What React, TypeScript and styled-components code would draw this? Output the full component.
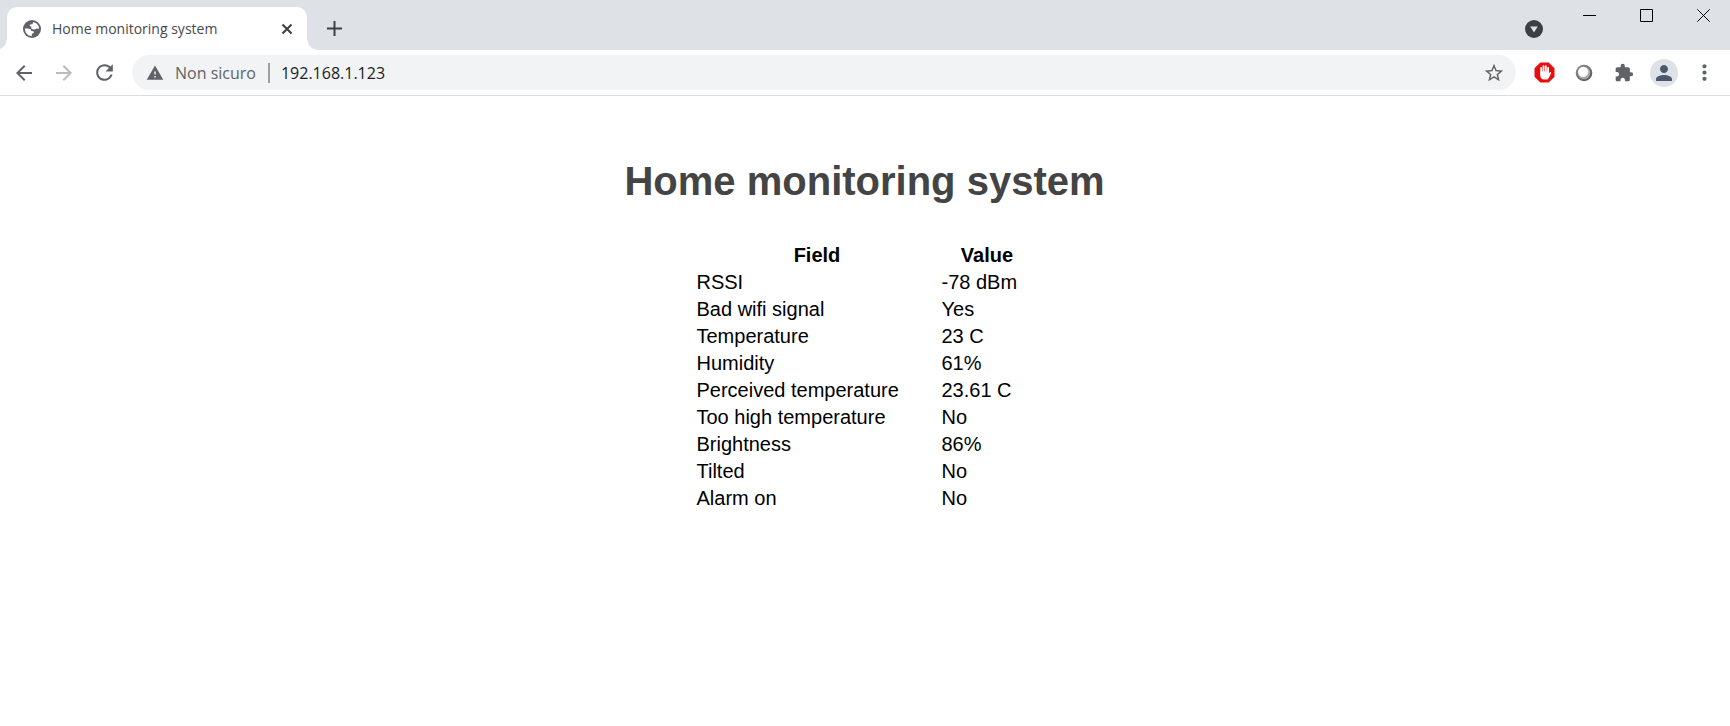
import React from "react";
import styled, { createGlobalStyle } from "styled-components";
import {
  MdArrowBack,
  MdArrowForward,
  MdRefresh,
  MdWarning,
  MdStarBorder,
  MdExtension,
  MdPerson,
  MdMoreVert,
} from "react-icons/md";

const GlobalStyle = createGlobalStyle`
  * { box-sizing: border-box; }
  body { margin: 0; background: #fff; }
  button { margin: 0; padding: 0; border: 0; background: none; font: inherit; cursor: pointer; }
`;

const chromeFont = `"Segoe UI", "Open Sans", "Noto Sans", sans-serif`;

const Browser = styled.div`
  display: flex;
  flex-direction: column;
  min-height: 100vh;
  font-family: ${chromeFont};
`;

const TabStrip = styled.header`
  display: flex;
  align-items: flex-start;
  height: 50px;
  padding-left: 7px;
  background: #dee1e6;
`;

const Tab = styled.div`
  position: relative;
  display: flex;
  align-items: center;
  width: 300px;
  height: 43px;
  margin-top: 7px;
  padding: 0 10px 0 15px;
  border-radius: 10px 10px 0 0;
  background: #fff;

  &::before,
  &::after {
    content: "";
    position: absolute;
    bottom: 0;
    width: 10px;
    height: 10px;
  }
  &::before {
    right: 100%;
    background: radial-gradient(circle at 0 0, transparent 9px, #fff 10px);
  }
  &::after {
    left: 100%;
    background: radial-gradient(circle at 100% 0, transparent 9px, #fff 10px);
  }
`;

const TabTitle = styled.span`
  flex: 1;
  margin-left: 10px;
  font-size: 14px;
  line-height: 20px;
  color: #45494d;
  white-space: nowrap;
`;

const IconButton = styled.button<{ $width?: number; $height?: number; $color?: string }>`
  display: flex;
  flex: none;
  align-items: center;
  justify-content: center;
  width: ${(p) => p.$width ?? 40}px;
  height: ${(p) => p.$height ?? 36}px;
  color: ${(p) => p.$color ?? "#5f6368"};
`;

const NewTab = styled(IconButton)`
  margin: 8px 0 0 9px;
`;

const TabSearch = styled(IconButton)`
  margin: 11px 9px 0 auto;
`;

const WindowControls = styled.div`
  display: flex;
  margin-right: -2px;
`;

const Toolbar = styled.nav`
  display: flex;
  align-items: center;
  height: 46px;
  padding: 0 6px 0 4px;
  border-bottom: 1px solid #dadce0;
  background: #fff;
`;

const AddressBar = styled.div`
  display: flex;
  flex: 1;
  align-items: center;
  height: 35px;
  margin: 0 8px;
  padding: 0 2px 0 14px;
  border-radius: 18px;
  background: #f1f3f4;
`;

const SecurityButton = styled.button`
  display: flex;
  align-items: center;
  gap: 11px;
  color: #5f6368;
  font-size: 16px;
  line-height: 24px;
`;

const Divider = styled.span`
  width: 2px;
  height: 20px;
  margin: 0 11px 0 12px;
  background: #9aa0a6;
`;

const AddressInput = styled.input`
  flex: 1;
  min-width: 0;
  padding: 0;
  border: 0;
  outline: 0;
  background: transparent;
  color: #202124;
  font-family: ${chromeFont};
  font-size: 16px;
  line-height: 24px;
`;

const Avatar = styled.span`
  display: flex;
  align-items: center;
  justify-content: center;
  width: 28px;
  height: 28px;
  border-radius: 50%;
  background: #dee1e6;
  color: #4c5870;
`;

const Page = styled.main`
  display: flex;
  flex-direction: column;
  align-items: center;
  padding: 62px 1px 40px 0;
  font-family: Arial, "Liberation Sans", sans-serif;
`;

const Title = styled.h1`
  margin: 0 0 37px;
  color: #444;
  font-size: 40px;
  line-height: 46px;
`;

const Readings = styled.table`
  border-spacing: 2px;
  color: #000;
  font-size: 20px;
  line-height: 23px;
`;

const cell = `
  padding: 1px;
  white-space: nowrap;
`;

const HeadCell = styled.th<{ $width: number }>`
  ${cell}
  width: ${(p) => p.$width}px;
`;

const Cell = styled.td`
  ${cell}
`;

const readings = [
  ["RSSI", "-78 dBm"],
  ["Bad wifi signal", "Yes"],
  ["Temperature", "23 C"],
  ["Humidity", "61%"],
  ["Perceived temperature", "23.61 C"],
  ["Too high temperature", "No"],
  ["Brightness", "86%"],
  ["Tilted", "No"],
  ["Alarm on", "No"],
];

const Globe = () => (
  <svg width="20" height="20" viewBox="0 0 20 20" aria-hidden="true">
    <circle cx="10" cy="10" r="9" fill="#5f6368" />
    <path
      d="M11.4 3 14.6 4.4 16.8 7.6 17 9.8 14.6 9.6 13 10.4 10.4 10.2 9.2 9.4 9.4 7.4 7.6 7 8 5.6 10.4 5.2ZM2.8 9.4 6.4 9.4 8.8 10.4 9.4 12 11.6 12.2 11.8 14 9.8 14.8 9.8 17.2 6.2 16.2 3.6 13.4Z"
      fill="#fff"
    />
  </svg>
);

const StopHand = () => (
  <svg width="21" height="21" viewBox="0 0 21 21" aria-hidden="true">
    <path d="M6.3.5h8.4l5.8 5.8v8.4l-5.8 5.8H6.3L.5 14.7V6.3Z" fill="#e60f0f" />
    <path
      d="M7.2 12V5.8M9.5 11V4.2M11.8 11V4.2M14.1 12V5.8"
      stroke="#fff"
      strokeWidth="1.8"
      strokeLinecap="round"
    />
    <path
      d="M6.3 9.4h8.7v2l.9-1.2c.6-.6 1.5 0 1.2.7l-2.2 4.8c-.6 1.2-1.5 1.9-3 1.9h-1.7c-2.6 0-3.9-1.8-3.9-4Z"
      fill="#fff"
    />
  </svg>
);

const Sphere = () => (
  <svg width="18" height="18" viewBox="0 0 18 18" aria-hidden="true">
    <defs>
      <linearGradient id="ring" x1="0" y1="0" x2="1" y2="1">
        <stop offset="0" stopColor="#8f8f8f" />
        <stop offset="1" stopColor="#555" />
      </linearGradient>
      <radialGradient id="ball" cx=".4" cy=".4" r=".65">
        <stop offset="0.7" stopColor="#fff" />
        <stop offset="1" stopColor="#d4d4d4" />
      </radialGradient>
    </defs>
    <circle cx="9" cy="9" r="8.3" fill="url(#ring)" />
    <circle cx="9" cy="9" r="6.2" fill="#a8a8a8" />
    <circle cx="8.3" cy="8" r="5.2" fill="url(#ball)" />
  </svg>
);

export default function App() {
  return (
    <Browser>
      <GlobalStyle />
      <TabStrip>
        <Tab>
          <Globe />
          <TabTitle>Home monitoring system</TabTitle>
          <IconButton $width={20} $height={20} $color="#3c4043" aria-label="Close tab">
            <svg width="12" height="12" viewBox="0 0 12 12">
              <path d="M1.5 1.5 10.5 10.5M10.5 1.5 1.5 10.5" stroke="currentColor" strokeWidth="2" />
            </svg>
          </IconButton>
        </Tab>
        <NewTab $width={36} $height={41} $color="#3c4043" aria-label="New tab">
          <svg width="15" height="15" viewBox="0 0 15 15">
            <path d="M7.5 0V15M0 7.5H15" stroke="currentColor" strokeWidth="2" />
          </svg>
        </NewTab>
        <TabSearch $width={36} $height={36} aria-label="Search tabs">
          <svg width="18" height="18" viewBox="0 0 18 18">
            <circle cx="9" cy="9" r="9" fill="#3c4043" />
            <path d="M5.2 6.4h7.6L9 12.4Z" fill="#dee1e6" />
          </svg>
        </TabSearch>
        <WindowControls>
          <IconButton $width={57} $height={31} $color="#000" aria-label="Minimize">
            <svg width="13" height="13" viewBox="0 0 13 13">
              <path d="M0 6.5H13" stroke="currentColor" />
            </svg>
          </IconButton>
          <IconButton $width={57} $height={31} $color="#000" aria-label="Maximize">
            <svg width="13" height="13" viewBox="0 0 13 13">
              <path d="M.5.5H12.5V12.5H.5Z" fill="none" stroke="currentColor" />
            </svg>
          </IconButton>
          <IconButton $width={57} $height={31} $color="#000" aria-label="Close">
            <svg width="13" height="13" viewBox="0 0 13 13">
              <path d="M.3.3 12.7 12.7M12.7.3.3 12.7" stroke="currentColor" />
            </svg>
          </IconButton>
        </WindowControls>
      </TabStrip>
      <Toolbar>
        <IconButton aria-label="Back">
          <MdArrowBack size={24} />
        </IconButton>
        <IconButton $color="#babcbe" aria-label="Forward">
          <MdArrowForward size={24} />
        </IconButton>
        <IconButton aria-label="Reload">
          <MdRefresh size={25} />
        </IconButton>
        <AddressBar>
          <SecurityButton>
            <MdWarning size={18} />
            Non sicuro
          </SecurityButton>
          <Divider />
          <AddressInput aria-label="Address" defaultValue="192.168.1.123" />
          <IconButton aria-label="Bookmark this page">
            <MdStarBorder size={22} />
          </IconButton>
        </AddressBar>
        <IconButton aria-label="Ad blocker">
          <StopHand />
        </IconButton>
        <IconButton aria-label="Sphere extension">
          <Sphere />
        </IconButton>
        <IconButton aria-label="Extensions">
          <MdExtension size={20} />
        </IconButton>
        <IconButton aria-label="Profile">
          <Avatar>
            <MdPerson size={24} />
          </Avatar>
        </IconButton>
        <IconButton aria-label="Menu">
          <MdMoreVert size={25} />
        </IconButton>
      </Toolbar>
      <Page>
        <Title>Home monitoring system</Title>
        <Readings>
          <thead>
            <tr>
              <HeadCell $width={243} scope="col">Field</HeadCell>
              <HeadCell $width={93} scope="col">Value</HeadCell>
            </tr>
          </thead>
          <tbody>
            {readings.map(([field, value]) => (
              <tr key={field}>
                <Cell>{field}</Cell>
                <Cell>{value}</Cell>
              </tr>
            ))}
          </tbody>
        </Readings>
      </Page>
    </Browser>
  );
}
